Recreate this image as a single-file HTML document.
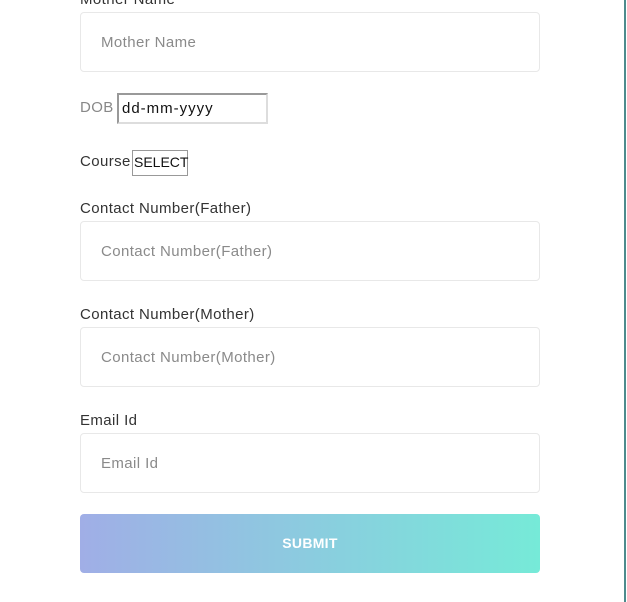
<!DOCTYPE html>
<html><head><meta charset="utf-8"><style>
*{box-sizing:border-box;margin:0;padding:0}
body{width:627px;height:602px;overflow:hidden;background:#fff;font-family:"Liberation Sans",sans-serif;position:relative;color:#333}
.edge{position:absolute;left:624px;top:0;width:2px;height:602px;background:#4d8b8d}
.lbl{position:absolute;left:80px;font-size:15px;letter-spacing:.4px;color:#333}
.inp{position:absolute;left:80px;width:460px;height:60px;border:1px solid #e8e8e8;border-radius:4px;padding-left:20px;line-height:60px;font-size:15px;letter-spacing:.4px;color:#8a8a8a}
.btn{position:absolute;left:80px;top:514px;width:460px;height:59px;border-radius:4px;background:linear-gradient(90deg,#a0aee6,#76ead8);color:#fff;font-weight:bold;font-size:14px;text-align:center;line-height:59px;letter-spacing:.3px}
</style></head><body>
<div class="lbl" style="top:-9px">Mother Name</div>
<div class="inp" style="top:12px">Mother Name</div>
<div class="lbl" style="top:99px;color:#888">DOB</div>
<div style="position:absolute;left:117px;top:93px;width:151px;height:31px;border:2px solid #999;border-right-color:#ddd;border-bottom-color:#ddd;font-size:15px;letter-spacing:1px;padding-left:3px;line-height:27px;color:#111">dd-mm-yyyy</div>
<div class="lbl" style="top:153px">Course</div>
<div style="position:absolute;left:132px;top:150px;width:56px;height:26px;border:1px solid #999;font-size:14px;line-height:22px;padding-left:1px;color:#111">SELECT</div>
<div class="lbl" style="top:200px">Contact Number(Father)</div>
<div class="inp" style="top:221px">Contact Number(Father)</div>
<div class="lbl" style="top:306px">Contact Number(Mother)</div>
<div class="inp" style="top:327px">Contact Number(Mother)</div>
<div class="lbl" style="top:412px">Email Id</div>
<div class="inp" style="top:433px">Email Id</div>
<div class="btn">SUBMIT</div>
<div class="edge"></div>
</body></html>
